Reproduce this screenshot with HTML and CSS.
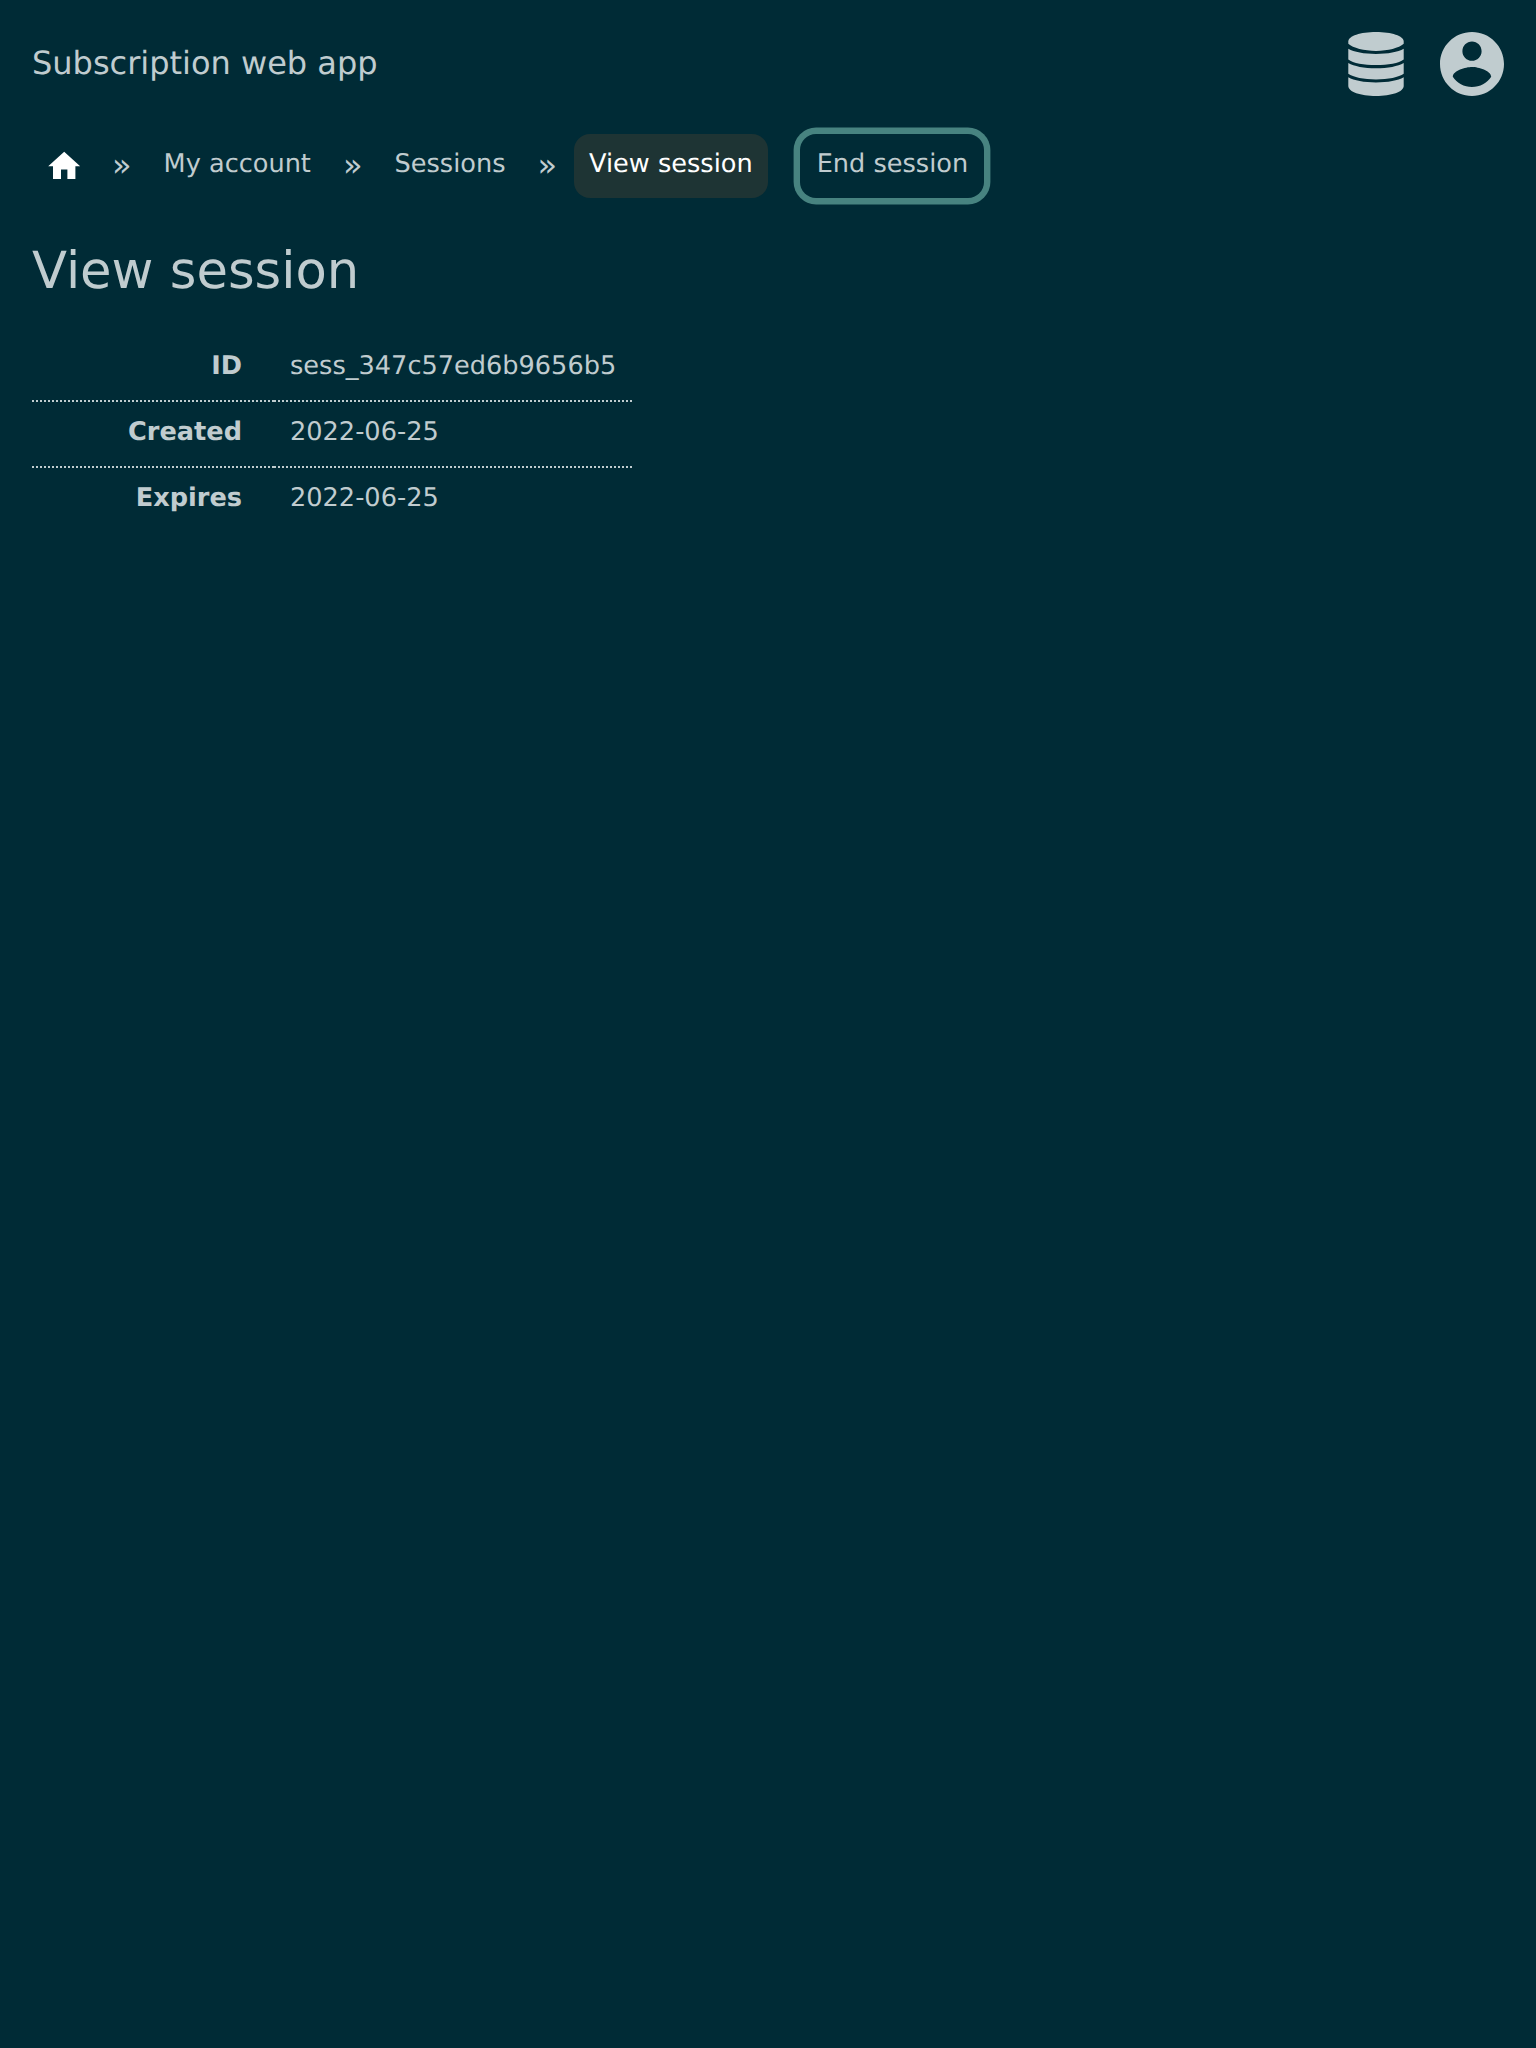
FILE: index.html
```html
<!DOCTYPE html>
<html lang="en">
<head>
<meta charset="utf-8">
<title>View session</title>
<link rel="stylesheet" href="styles.css">
</head>
<body>
<header class="header">
  <a class="title">Subscription web app</a>
  <div class="menus">
    <svg class="icon-database" viewBox="0 0 56 64">
      <path d="M.3 9.500C.3 4 12.500 0 28 0s27.700 4 27.700 9.500v2.300C51 16 40 18.900 28 18.900S5 16 .3 11.800z"/>
      <path d="M.3 16.800C6 20 16 22 28 22s22-2 27.700-5.200v10.600C51 31 40 33.100 28 33.100S5 31 .3 27.400z"/>
      <path d="M.3 31C6 34.300 16 36.300 28 36.300s22-2 27.700-5.300v10.700C51 45.200 40 47.400 28 47.400S5 45.200 .3 41.700z"/>
      <path d="M.3 45.300C6 48.600 16 50.500 28 50.500s22-1.900 27.700-5.200V54c0 5.800-12.200 10-27.700 10S.3 59.800 .3 54z"/>
    </svg>
    <svg class="icon-account" viewBox="2 2 20 20">
      <path d="M12 2C6.480 2 2 6.480 2 12s4.480 10 10 10 10-4.480 10-10S17.520 2 12 2zm0 3c1.660 0 3 1.340 3 3s-1.340 3-3 3-3-1.340-3-3 1.340-3 3-3zm0 14.200c-2.500 0-4.710-1.280-6-3.220.03-1.990 4-3.080 6-3.080 1.990 0 5.970 1.090 6 3.080-1.290 1.940-3.500 3.220-6 3.220z"/>
    </svg>
  </div>
</header>
<nav class="navbar">
  <a class="home"><svg class="icon-home" viewBox="0 0 24 24"><path d="M10 20v-6h4v6h5v-8h3L12 3 2 12h3v8z"/></svg></a>
  <span class="separator">»</span>
  <a class="link">My account</a>
  <span class="separator">»</span>
  <a class="link">Sessions</a>
  <span class="separator">»</span>
  <a class="link current">View session</a>
  <a class="link action">End session</a>
</nav>
<main class="content">
  <h1 class="heading">View session</h1>
  <table class="details">
    <tr><th>ID</th><td>sess_347c57ed6b9656b5</td></tr>
    <tr><th>Created</th><td>2022-06-25</td></tr>
    <tr><th>Expires</th><td>2022-06-25</td></tr>
  </table>
</main>
</body>
</html>
```
FILE: styles.css
```css
body {
  margin: 0;
  padding: 32px;
  background: #002b36;
  color: #c0cccf;
  font-family: "DejaVu Sans", sans-serif;
  font-size: 25.6px;
  text-rendering: geometricPrecision;
}
svg { display: block; fill: currentColor; }
.header {
  display: flex;
  justify-content: space-between;
  height: 64px;
}
.title { font-size: 32px; line-height: 62px; }
.menus { display: flex; gap: 36px; }
.icon-database { width: 56px; height: 64px; }
.icon-account { width: 64px; height: 64px; }
.navbar {
  display: flex;
  align-items: center;
  height: 64px;
  margin-top: 38px;
  white-space: nowrap;
}
.home {
  box-sizing: border-box;
  width: 64px;
  height: 64px;
  padding: 13.4px 12.8px 0;
  color: #fff;
}
.icon-home { width: 38.4px; height: 38.4px; }
.separator {
  height: 64px;
  padding: 0 16px;
  font-size: 32px;
  line-height: 62px;
}
.link {
  box-sizing: border-box;
  height: 64px;
  padding: 0 16px;
  border-radius: 16px;
  line-height: 60px;
}
.current { margin: 0 .8px; padding: 0 15.2px; background: #1e3434; color: #fff; }
.action { margin-left: 31.6px; padding: 0 16.2px 0 16.4px; box-shadow: 0 0 0 6.4px #478380; }
.heading {
  margin: 40px 0 0;
  font-size: 51.2px;
  font-weight: 400;
  line-height: 66px;
}
.details {
  margin-top: 32px;
  border-collapse: collapse;
}
.details th,
.details td {
  height: 64px;
  padding: 0 16px;
  line-height: 60px;
  vertical-align: top;
}
.details th {
  width: 210px;
  padding: 0 32px 0 0;
  text-align: right;
}
.details tr + tr > * { border-top: 2px dotted #c0cccf; }
```
